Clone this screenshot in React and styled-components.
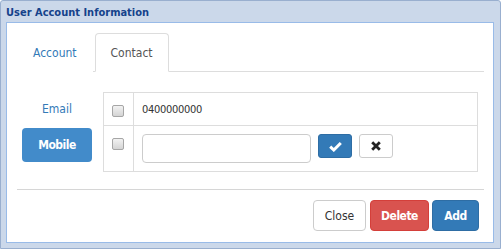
import React from "react";
import styled, { createGlobalStyle } from "styled-components";

const Global = createGlobalStyle`
  html, body { margin: 0; padding: 0; background: #fff; }
  body { font-family: "DejaVu Sans Condensed", "DejaVu Sans", sans-serif; }
  * { box-sizing: border-box; }
`;

const Window = styled.div`
  width: 501px;
  height: 249px;
  border: 1px solid #99afcf;
  border-radius: 3px 3px 0 0;
  background: #cbd8ea;
  display: flex;
  flex-direction: column;
`;

const Header = styled.div`
  height: 21px;
  padding: 5px 0 0 5px;
  font-weight: bold;
  font-size: 11px;
  line-height: 13px;
  color: #15428b;
`;

const Body = styled.div`
  flex: 1;
  margin: 0 6px 5px 5px;
  background: #fff;
  border: 1px solid #99bbe8;
  padding: 10px 9px 0 10px;
  display: flex;
  flex-direction: column;
`;

const TabBar = styled.div`
  display: flex;
  border-bottom: 1px solid #ddd;
  height: 39px;
`;

const Tab = styled.div`
  height: 39px;
  margin-right: 2px;
  margin-bottom: -1px;
  padding: 0 15px;
  display: flex;
  align-items: center;
  font-size: 12px;
  color: ${(p) => (p.$active ? "#555" : "#337ab7")};
  border: 1px solid ${(p) => (p.$active ? "#ddd" : "transparent")};
  border-bottom-color: ${(p) => (p.$active ? "#fff" : "transparent")};
  border-radius: 4px 4px 0 0;
  background: #fff;
`;

const Content = styled.div`
  display: flex;
  gap: 6px;
  margin-top: 20px;
`;

const Labels = styled.div`
  width: 80px;
  display: flex;
  flex-direction: column;
  align-items: center;
`;

const LabelLink = styled.div`
  height: 34px;
  display: flex;
  align-items: center;
  font-size: 12px;
  color: #337ab7;
`;

const LabelButton = styled.div`
  margin-top: 2px;
  width: 70px;
  height: 34px;
  border-radius: 4px;
  background: #428bca;
  color: #fff;
  font-weight: bold;
  font-size: 12px;
  letter-spacing: -0.5px;
  display: flex;
  align-items: center;
  justify-content: center;
`;

const Table = styled.table`
  width: 375px;
  border-collapse: collapse;
  border: 1px solid #ddd;
  font-size: 11px;
  letter-spacing: -0.3px;
  color: #333;
`;

const Row = styled.tr`
  border-top: 1px solid #ddd;
`;

const CheckCell = styled.td`
  width: 30px;
  padding: 8px 0 8px 8px;
  vertical-align: top;
  border-right: 1px solid #ddd;
`;

const Cell = styled.td`
  padding: ${(p) => (p.$tall ? "8px" : "0 8px")};
  height: ${(p) => (p.$tall ? "auto" : "33px")};
  vertical-align: ${(p) => (p.$tall ? "top" : "middle")};
`;

const Check = styled.input.attrs({ type: "checkbox" })`
  appearance: none;
  display: block;
  margin: 4px 0 0 0;
  width: 12px;
  height: 12px;
  border: 1px solid #a6a6a6;
  border-radius: 2px;
  background: linear-gradient(#f2f2f2, #d4d4d4);
`;

const EditRow = styled.div`
  display: flex;
  gap: 7px;
  align-items: flex-start;
`;

const TextInput = styled.input`
  width: 169px;
  height: 29px;
  border: 1px solid #ccc;
  border-radius: 4px;
  outline: none;
`;

const IconButton = styled.button`
  width: 34px;
  height: 24px;
  padding: 0;
  border-radius: 3px;
  border: 1px solid ${(p) => (p.$primary ? "#2e6da4" : "#ccc")};
  background: ${(p) => (p.$primary ? "#337ab7" : "#fff")};
  display: flex;
  align-items: center;
  justify-content: center;
`;

const Divider = styled.div`
  margin-top: 17px;
  border-top: 1px solid #d6d6d6;
`;

const Footer = styled.div`
  display: flex;
  justify-content: flex-end;
  margin-top: 10px;
  padding-right: 5px;
`;

const variants = {
  default: { bg: "#fff", border: "#ccc", color: "#333", weight: "normal", ls: "0" },
  danger: { bg: "#d9534f", border: "#d43f3a", color: "#fff", weight: "bold", ls: "-0.5px" },
  primary: { bg: "#337ab7", border: "#2e6da4", color: "#fff", weight: "bold", ls: "-0.5px" },
};

const Button = styled.button`
  height: 31px;
  width: ${(p) => p.$w}px;
  margin-left: ${(p) => p.$ml}px;
  padding: 0;
  font-family: inherit;
  font-size: 12px;
  border-radius: 4px;
  border: 1px solid ${(p) => variants[p.$v].border};
  background: ${(p) => variants[p.$v].bg};
  color: ${(p) => variants[p.$v].color};
  font-weight: ${(p) => variants[p.$v].weight};
  letter-spacing: ${(p) => variants[p.$v].ls};
`;

const CheckIcon = () => (
  <svg width="13" height="11" viewBox="0 0 13 11">
    <path d="M1.2 5.6 L4.8 9 L11.8 2" fill="none" stroke="#fff" strokeWidth="3" strokeLinejoin="miter" />
  </svg>
);

const XIcon = () => (
  <svg width="10" height="10" viewBox="0 0 10 10">
    <path d="M1.2 1.2 L8.8 8.8 M8.8 1.2 L1.2 8.8" stroke="#222" strokeWidth="2.8" />
  </svg>
);

export default function App() {
  return (
    <>
      <Global />
      <Window>
        <Header>User Account Information</Header>
        <Body>
          <TabBar>
            <Tab>Account</Tab>
            <Tab $active>Contact</Tab>
          </TabBar>
          <Content>
            <Labels>
              <LabelLink>Email</LabelLink>
              <LabelButton>Mobile</LabelButton>
            </Labels>
            <Table>
              <tbody>
                <Row>
                  <CheckCell><Check /></CheckCell>
                  <Cell>0400000000</Cell>
                </Row>
                <Row>
                  <CheckCell><Check /></CheckCell>
                  <Cell $tall>
                    <EditRow>
                      <TextInput />
                      <IconButton $primary><CheckIcon /></IconButton>
                      <IconButton><XIcon /></IconButton>
                    </EditRow>
                  </Cell>
                </Row>
              </tbody>
            </Table>
          </Content>
          <Divider />
          <Footer>
            <Button $v="default" $w={53} $ml={0}>Close</Button>
            <Button $v="danger" $w={59} $ml={4}>Delete</Button>
            <Button $v="primary" $w={47} $ml={3}>Add</Button>
          </Footer>
        </Body>
      </Window>
    </>
  );
}
